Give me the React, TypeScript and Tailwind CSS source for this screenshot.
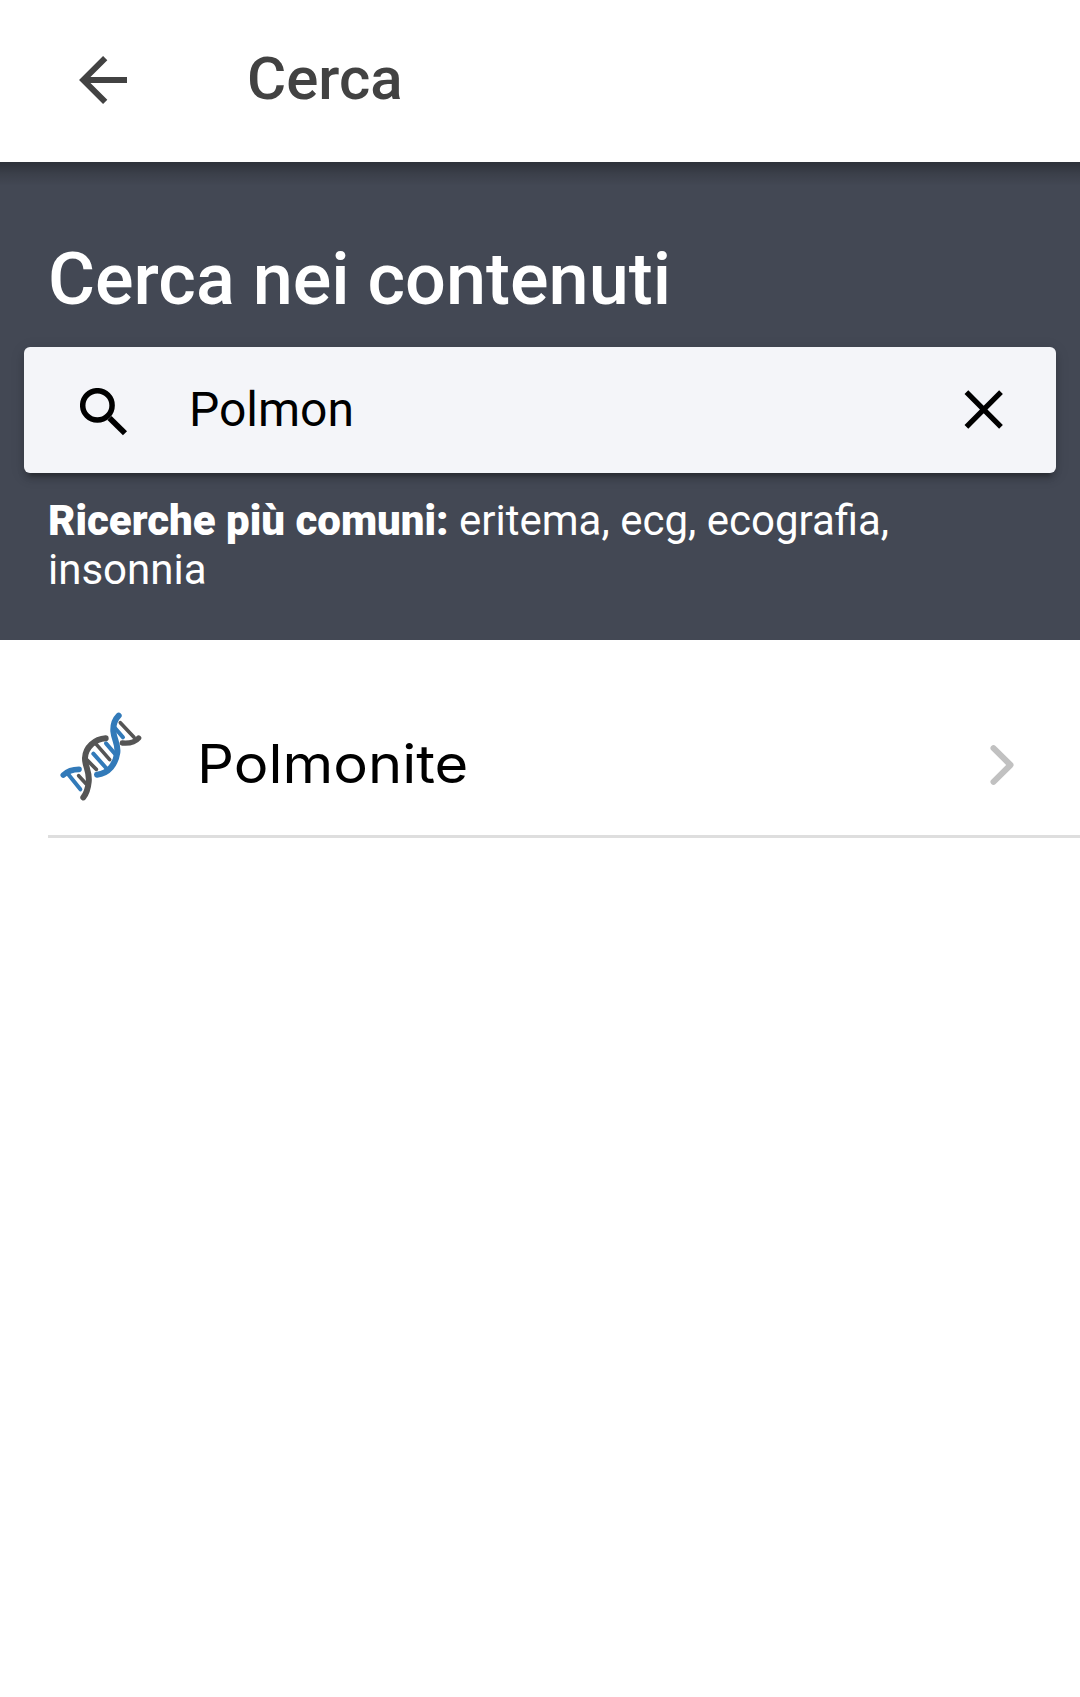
import React, { useState } from 'react';

interface SearchResult {
  id: number;
  title: string;
}

const results: SearchResult[] = [{ id: 1, title: 'Polmonite' }];
const commonSearches = ['eritema', 'ecg', 'ecografia', 'insonnia'];

const BackIcon = () => (
  <svg className="w-12 h-12" viewBox="0 0 48 48" fill="none" stroke="#424242" strokeWidth="6">
    <path d="M48 24H6M26.2 2.1L4.3 24l21.9 21.9" />
  </svg>
);

const SearchIcon = () => (
  <svg className="w-12 h-12" viewBox="0 0 48 48" fill="none" stroke="#000">
    <circle cx="17.4" cy="17.4" r="14.7" strokeWidth="5.5" />
    <path d="M29.5 30L45 45.3" strokeWidth="5.8" />
  </svg>
);

const ClearIcon = () => (
  <svg className="w-[39px] h-[39px]" viewBox="0 0 39 39" fill="none" stroke="#000" strokeWidth="5.3">
    <path d="M2.4 2.2l34.6 34.6M37 2.2L2.4 36.8" />
  </svg>
);

const ChevronIcon = () => (
  <svg className="w-6 h-10" viewBox="0 0 24 40" fill="none" stroke="#c1c1c1" strokeWidth="6" strokeLinecap="round" strokeLinejoin="round">
    <path d="M3.5 3.2L20.5 20 3.5 36.8" />
  </svg>
);

const DnaIcon = () => (
  <svg className="w-[110px] h-[110px]" viewBox="0 0 330 330" fill="none" strokeLinecap="round">
    {/* rungs */}
    <g stroke="#327ab9" strokeWidth="12">
      <path d="M54 222L91 268" />
      <path d="M130 161L171 207" />
      <path d="M168 130L197 164" />
      <path d="M195 84L219 112" />
    </g>
    <g stroke="#555" strokeWidth="11">
      <path d="M211 68L252 112" />
      <path d="M86 227L108 251" />
      <path d="M110 179L139 208" />
      <path d="M139 133L179 179" />
    </g>
    {/* strands */}
    <path d="M40 225C54 212 70 208 87 208" stroke="#327ab9" strokeWidth="17" />
    <path d="M206 47C193 60 189 76 190 94C192 119 205 131 202 158C197 192 176 220 141 224" stroke="#327ab9" strokeWidth="18" />
    <path d="M167 115C134 117 106 143 105 174C104 198 120 216 116 246C114 266 109 281 100 292" stroke="#555" strokeWidth="18" />
    <path d="M217 129C240 131 256 126 266 114" stroke="#555" strokeWidth="16" />
  </svg>
);

const App: React.FC = () => {
  const [query, setQuery] = useState('Polmon');

  return (
    <div className="flex flex-col min-h-screen bg-white font-['Roboto',sans-serif]">
      {/* Header */}
      <header className="relative flex items-center h-[162px] pl-[79px] bg-white">
        <button className="mt-[-2px]">
          <BackIcon />
        </button>
        <h1 className="ml-[120px] mt-[-4px] text-[60px] leading-[72px] font-medium text-[#424242]">Cerca</h1>
        <div className="absolute left-0 right-0 top-full h-6 bg-linear-to-b from-black/32 via-black/12 to-transparent" />
      </header>

      {/* Search */}
      <section className="h-[478px] px-6 pt-[76px] bg-[#434854] text-white">
        <h2 className="px-6 text-[72px] leading-[84px] font-medium">Cerca nei contenuti</h2>
        <div className="flex items-center h-[126px] mt-[25px] pl-14 pr-[53px] rounded-md bg-[#f4f5f9] shadow-[0_9px_3px_-6px_rgba(0,0,0,0.2),0_6px_6px_0_rgba(0,0,0,0.14),0_3px_15px_0_rgba(0,0,0,0.12)]">
          <div className="pt-[3px]">
            <SearchIcon />
          </div>
          <input
            className="flex-1 min-w-0 ml-[61px] text-[48px] leading-[60px] text-black bg-transparent outline-none"
            value={query}
            onChange={(e) => setQuery(e.target.value)}
          />
          <button className="pb-[2px]" onClick={() => setQuery('')}>
            <ClearIcon />
          </button>
        </div>
        <p className="px-6 mt-[23px] text-[42px] leading-[49px]">
          <b className="font-black">Ricerche più comuni:</b> {commonSearches.join(', ')}
        </p>
      </section>

      {/* Results */}
      <ul className="pl-12 pt-[51px]">
        {results.map((item) => (
          <li key={item.id} className="flex items-center h-[147px] pr-[66px] border-b-[3px] border-[#dedede]">
            <div className="ml-0.5 mt-[-16px]">
              <DnaIcon />
            </div>
            <span className="flex-1 ml-[37px] mt-[1px] origin-left scale-x-[1.093] text-[53px] leading-[64px] font-['Inter',sans-serif] text-black">
              {item.title}
            </span>
            <div className="pt-[4px]">
              <ChevronIcon />
            </div>
          </li>
        ))}
      </ul>
    </div>
  );
};

export default App;
